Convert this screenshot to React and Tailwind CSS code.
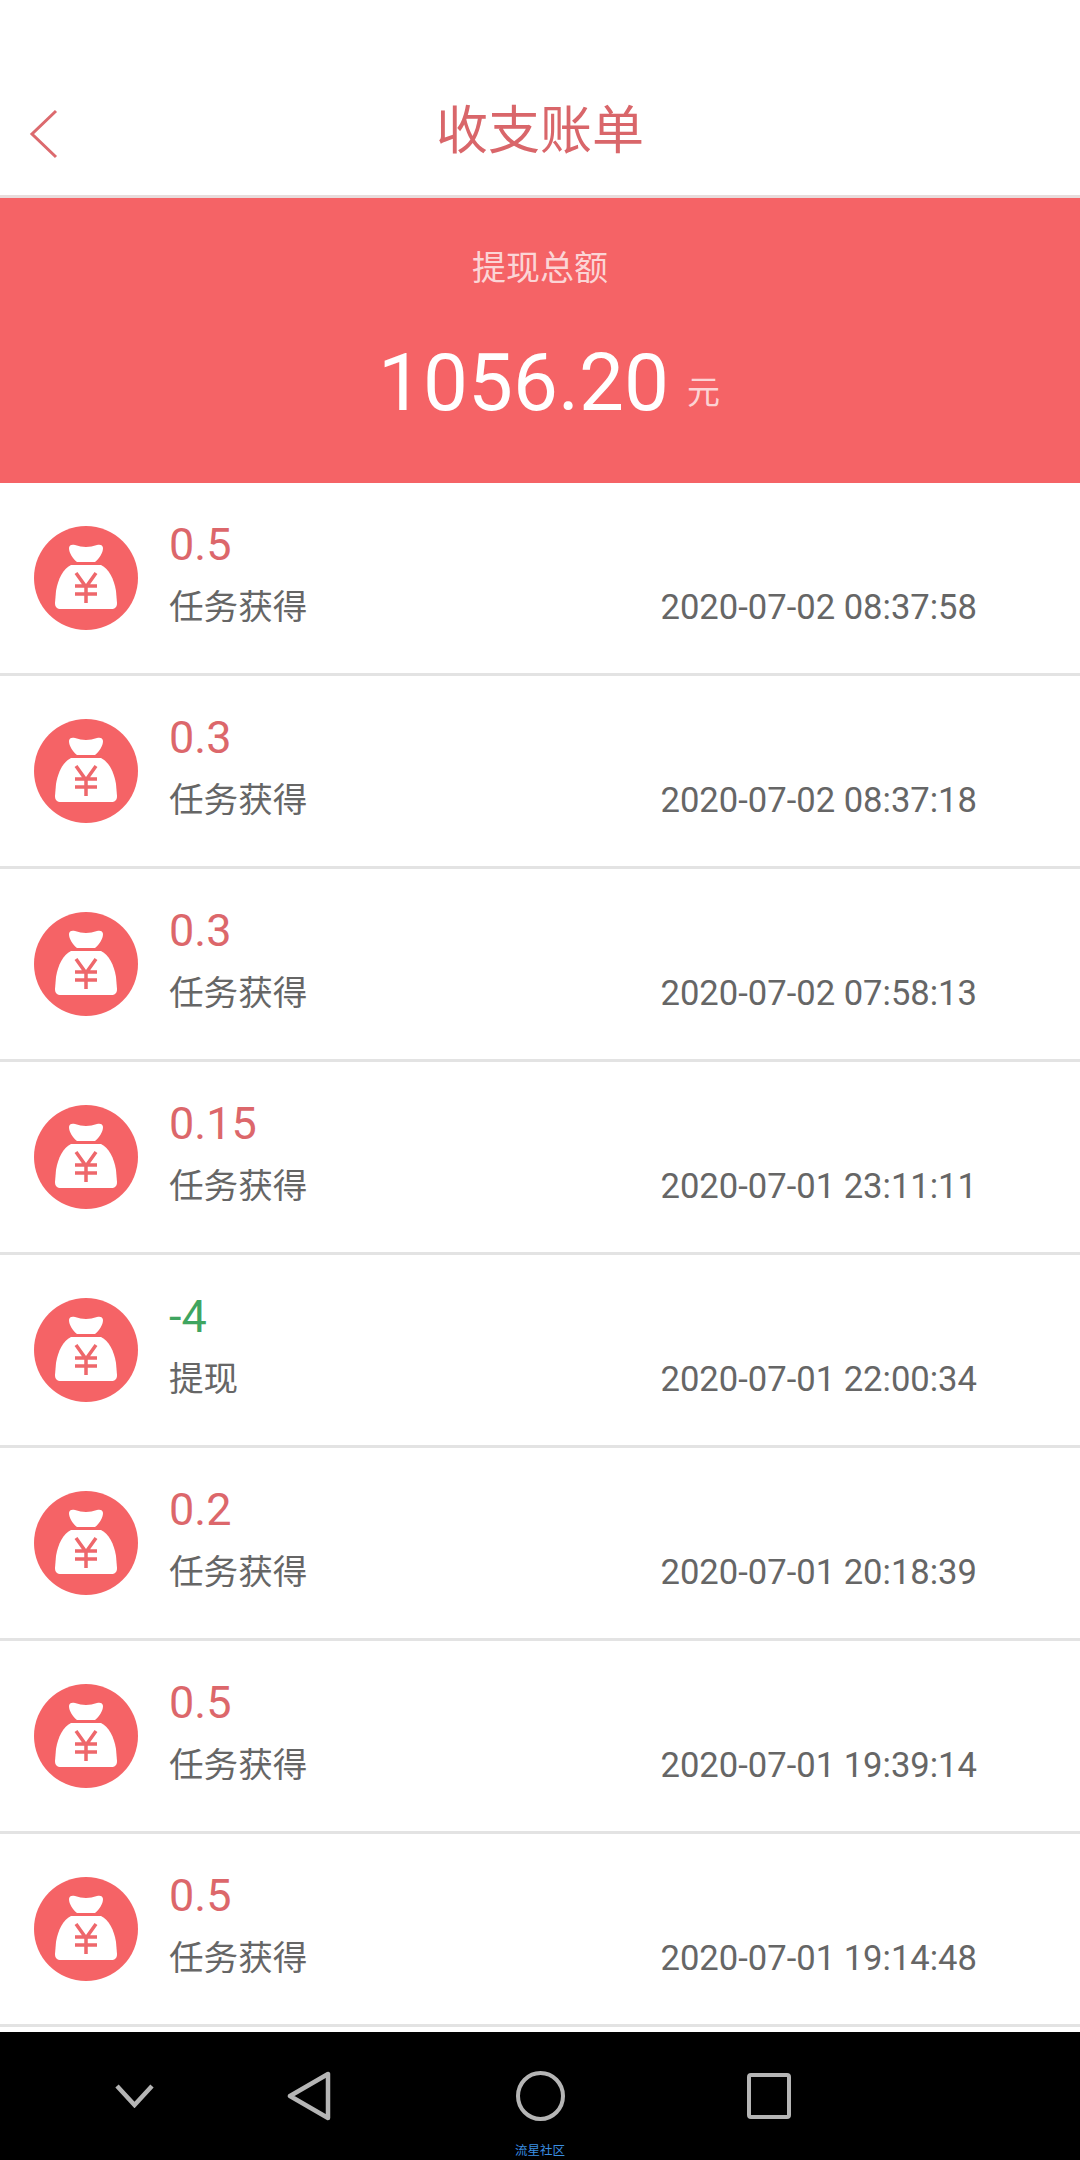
const RECORDS = [
  { amount: '0.5', label: '任务获得', time: '2020-07-02 08:37:58' },
  { amount: '0.3', label: '任务获得', time: '2020-07-02 08:37:18' },
  { amount: '0.3', label: '任务获得', time: '2020-07-02 07:58:13' },
  { amount: '0.15', label: '任务获得', time: '2020-07-01 23:11:11' },
  { amount: '-4', label: '提现', time: '2020-07-01 22:00:34', out: true },
  { amount: '0.2', label: '任务获得', time: '2020-07-01 20:18:39' },
  { amount: '0.5', label: '任务获得', time: '2020-07-01 19:39:14' },
  { amount: '0.5', label: '任务获得', time: '2020-07-01 19:14:48' },
];

const fontClass = "font-['Roboto','Noto_Sans_CJK_SC',sans-serif]";

function MoneyBag() {
  return (
    <svg width="104" height="104" viewBox="0 0 104 104" className="shrink-0">
      <circle cx="52" cy="52" r="52" fill="#f56366" />
      <path d="M35 22c0-3 3-4 6-3 4 1 7 2 11 2s7-1 11-2c3-1 6 0 6 3 0 5-4 11-8 14H43c-4-3-8-9-8-14z" fill="#fff" />
      <path d="M37 39h30c8 4 13 14 15 26l1 12c0 4-2 6-6 6H27c-4 0-6-2-6-6l1-12c2-12 7-22 15-26z" fill="#fff" />
      <path d="M42 47l10 14 10-14M52 61v16M41 60h22M41 68h22" fill="none" stroke="#ee676b" strokeWidth="3.5" />
    </svg>
  );
}

function RecordRow({ amount, label, time, out }) {
  return (
    <div className="flex h-[193px] items-start border-b-[3px] border-[#e3e3e3] pl-[34px] pr-[103px] pt-[43px]">
      <MoneyBag />
      <div className="ml-[31px] flex flex-1 flex-col">
        <div className={`mt-[1px] h-[36px] text-[45px] leading-[36px] ${out ? 'text-[#3fa560]' : 'text-[#dc676b]'}`}>{amount}</div>
        <div className="mt-[26px] flex items-center justify-between text-[34.6px] leading-[36px] text-[#666666]">
          <span>{label}</span>
          <span>{time}</span>
        </div>
      </div>
    </div>
  );
}

export default function App() {
  return (
    <div className={`flex h-[2160px] w-[1080px] flex-col overflow-hidden bg-white ${fontClass}`}>
      <header className="relative flex h-[198px] items-end justify-center border-b-[3px] border-[#e8dcdc] pb-[33px]">
        <svg width="30" height="50" viewBox="0 0 30 50" className="absolute bottom-[36px] left-[29px]">
          <path d="M27 2L3 25l24 23" fill="none" stroke="#dc6a6e" strokeWidth="3" />
        </svg>
        <h1 className="text-[52px] leading-[60px] font-normal text-[#d9666a]">收支账单</h1>
      </header>

      <section className="flex h-[285px] flex-col items-center bg-[#f56366] pt-[48px]">
        <div className="text-[34px] leading-[44px] text-[#fbd5d6]">提现总额</div>
        <div className="mt-[48px] flex items-baseline pl-[18px]">
          <span className="text-[80px] leading-[90px] text-white">1056.20</span>
          <span className="ml-[18px] -translate-y-[6px] text-[33px] text-[#fcd3d4]">元</span>
        </div>
      </section>

      <main className="flex-1">
        {RECORDS.map((r, i) => (
          <RecordRow key={i} {...r} />
        ))}
      </main>

      <nav className="relative flex h-[128px] items-start bg-black pl-[115px] pt-[39px]">
        <svg width="39" height="24" viewBox="0 0 39 24" className="mt-[13px]">
          <path d="M2 2l17.5 19L37 2" fill="none" stroke="#b5b5b5" strokeWidth="4.5" />
        </svg>
        <svg width="44" height="50" viewBox="0 0 44 50" className="ml-[133px]">
          <path d="M41 3v44L3 25z" fill="none" stroke="#b5b5b5" strokeWidth="4.5" strokeLinejoin="round" />
        </svg>
        <svg width="49" height="50" viewBox="0 0 49 50" className="ml-[185px]">
          <ellipse cx="24.5" cy="25" rx="22.5" ry="23" fill="none" stroke="#b5b5b5" strokeWidth="4" />
        </svg>
        <svg width="44" height="46" viewBox="0 0 44 46" className="ml-[182px] mt-[2px]">
          <rect x="2" y="2" width="40" height="42" rx="2" fill="none" stroke="#b5b5b5" strokeWidth="4" />
        </svg>
        <span className="absolute left-[515px] top-[112px] text-[12.5px] leading-[14px] text-[#3a8ee0]">流星社区</span>
      </nav>
    </div>
  );
}
